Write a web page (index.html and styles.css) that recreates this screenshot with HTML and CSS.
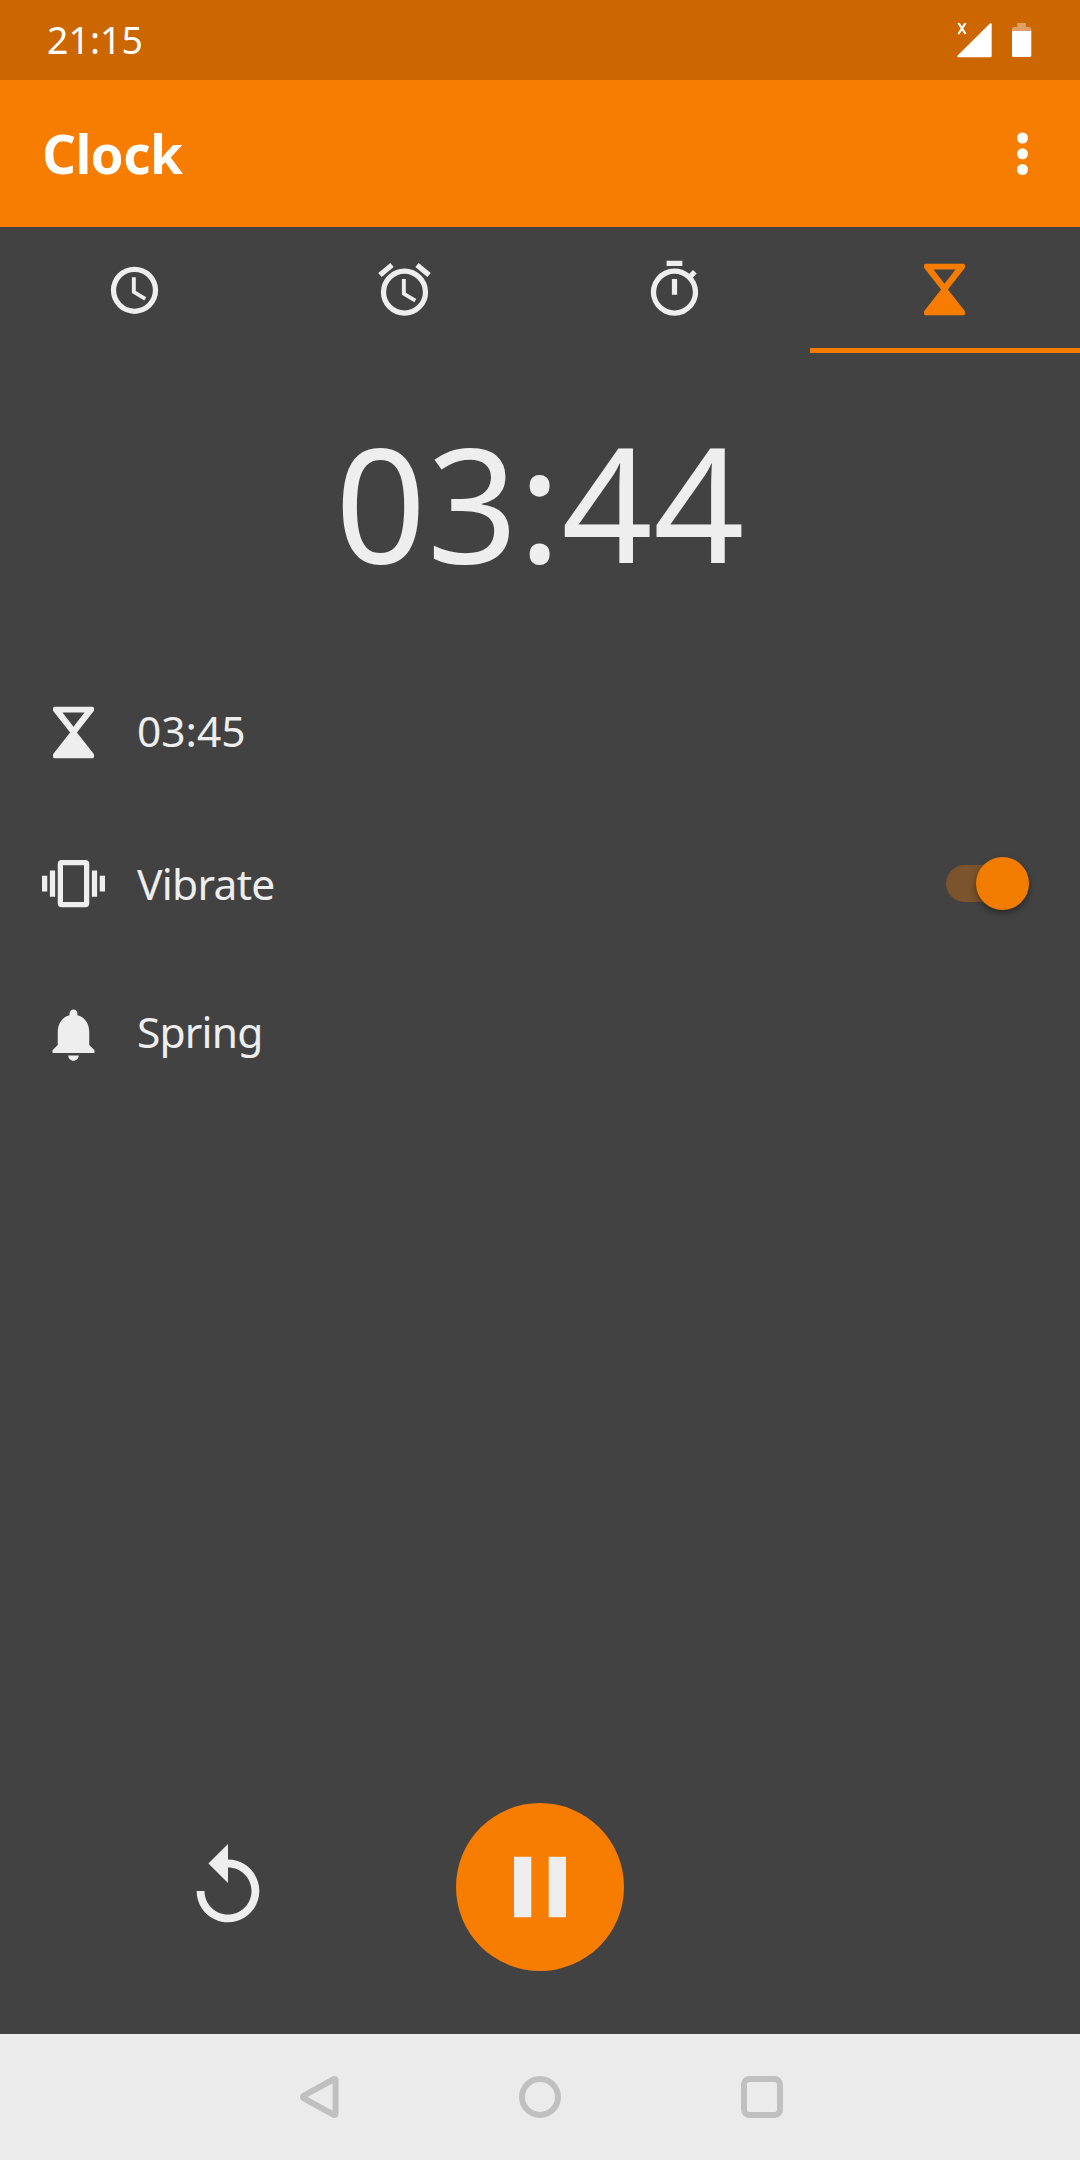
FILE: index.html
```html
<!DOCTYPE html>
<html lang="en">
<head>
<meta charset="utf-8">
<title>Clock</title>
<link rel="stylesheet" href="styles.css">
</head>
<body>
<div class="screen">
  <div class="status-bar">
    <span class="status-time">21:15</span>
    <div class="status-icons">
      <svg width="35" height="35" viewBox="0 0 35 35"><path d="M33.6.2Q34.7.2 34.7 1.2V32.8Q34.7 34.3 33.2 34.3H1.2Q-.2 34 .6 32.6L32.9.5Z" fill="#fff"/><path d="M1.4 0 8.6 11M8.6 0 1.4 11" stroke="#fff" stroke-width="2.2" fill="none"/></svg>
      <svg width="20" height="35" viewBox="0 0 20 35"><path d="M0 9V6Q0 4 2 4H5.2V0H14V4H17.5Q19.3 4 19.3 6V9Z" fill="#dfa066"/><path d="M0 8H19.3V32.5Q19.3 34 17.8 34H1.5Q0 34 0 32.5Z" fill="#fff"/></svg>
    </div>
  </div>
  <header class="app-bar">
    <h1 class="title">Clock</h1>
    <svg class="more" width="12" height="44" viewBox="0 0 12 44" fill="#fff"><circle cx="6.5" cy="6" r="5.5"/><circle cx="6.5" cy="21.8" r="5.5"/><circle cx="6.5" cy="37.5" r="5.5"/></svg>
  </header>
  <nav class="tabs">
    <div class="tab"><svg class="icon" viewBox="0 0 24 24"><path transform="translate(0 -.7)" d="M12.5 8H11v6l4.75 2.85.75-1.23-4-2.37zM12 4a9 9 0 1 0 0 18 9 9 0 0 0 0-18zm0 16a7 7 0 1 1 0-14 7 7 0 0 1 0 14z"/></svg></div>
    <div class="tab"><svg class="icon" viewBox="0 0 24 24"><path d="M12.5 8H11v6l4.75 2.85.75-1.23-4-2.37zM22 5.72l-4.6-3.86-1.29 1.53 4.6 3.86zM7.88 3.39 6.6 1.86 2 5.71l1.29 1.53zM12 4a9 9 0 1 0 0 18 9 9 0 0 0 0-18zm0 16a7 7 0 1 1 0-14 7 7 0 0 1 0 14z"/></svg></div>
    <div class="tab"><svg class="icon" viewBox="0 0 24 24"><path d="M15 1H9v2h6zm-4 13h2V8h-2zm8.03-6.61 1.42-1.42c-.43-.51-.9-.99-1.41-1.41l-1.42 1.42A8.96 8.96 0 0 0 12 4a9 9 0 1 0 7.03 3.39zM12 20a7 7 0 1 1 0-14 7 7 0 0 1 0 14z"/></svg></div>
    <div class="tab active"><svg class="icon" viewBox="0 0 24 24"><path fill-rule="evenodd" d="M4.8 2.2H19.2Q19.8 2.2 19.8 2.8V3.7L13.3 12 19.8 20.3V21.2Q19.8 21.8 19.2 21.8H4.8Q4.2 21.8 4.2 21.2V20.3L10.7 12 4.2 3.7V2.8Q4.2 2.2 4.8 2.2ZM7.8 4.4 12 9.8 16.2 4.4Z"/></svg></div>
  </nav>
  <main class="content">
    <div class="countdown">03:44</div>
    <div class="row"><svg class="icon" viewBox="0 0 24 24"><path fill-rule="evenodd" d="M4.8 2.2H19.2Q19.8 2.2 19.8 2.8V3.7L13.3 12 19.8 20.3V21.2Q19.8 21.8 19.2 21.8H4.8Q4.2 21.8 4.2 21.2V20.3L10.7 12 4.2 3.7V2.8Q4.2 2.2 4.8 2.2ZM7.8 4.4 12 9.8 16.2 4.4Z"/></svg><span class="label label-time">03:45</span></div>
    <div class="row row-vibrate"><svg class="icon" viewBox="0 0 24 24"><path d="M0 15h2V9H0zm3 2h2V7H3zm19-8v6h2V9zm-3 8h2V7h-2zM16.5 3h-9A1.5 1.5 0 0 0 6 4.5v15A1.5 1.5 0 0 0 7.5 21h9a1.5 1.5 0 0 0 1.5-1.5v-15A1.5 1.5 0 0 0 16.5 3zM16 19H8V5h8z"/></svg><span class="label label-vibrate">Vibrate</span><div class="switch"><div class="thumb"></div></div></div>
    <div class="row row-sound"><svg class="icon" viewBox="0 0 24 24"><path d="M12 22c1.1 0 2-.9 2-2h-4c0 1.1.89 2 2 2zm6-6v-5c0-3.07-1.64-5.64-4.5-6.32V4c0-.83-.67-1.5-1.5-1.5s-1.5.67-1.5 1.5v.68C7.63 5.36 6 7.92 6 11v5l-2 2v1h16v-1z"/></svg><span class="label label-sound">Spring</span></div>
  </main>
  <div class="controls">
    <svg class="reset" viewBox="0 0 24 24"><path d="M12 5V1L7 6l5 5V7c3.31 0 6 2.69 6 6s-2.69 6-6 6-6-2.69-6-6H4c0 4.42 3.58 8 8 8s8-3.58 8-8-3.58-8-8-8z"/></svg>
    <div class="pause"><svg width="104" height="104" viewBox="0 0 24 24"><path d="M6 19h4V5H6zm8-14v14h4V5z"/></svg></div>
  </div>
  <div class="nav-bar">
    <svg width="42" height="42" viewBox="0 0 42 42"><path d="M37.2 3 6.8 19.7Q5 21 6.8 22.3L37.200 39Q38.600 39 38.600 37.200V4.800Q38.600 3 37.200 3Z"/></svg>
    <svg width="42" height="42" viewBox="0 0 42 42"><circle cx="21" cy="21" r="18"/></svg>
    <svg width="42" height="42" viewBox="0 0 42 42"><rect x="3" y="3" width="36" height="36" rx="5.5"/></svg>
  </div>
</div>
</body>
</html>
```
FILE: styles.css
```css
* { box-sizing: border-box; }
body {
  margin: 0;
  background: #424242;
  color: #eee;
  font-family: "Noto Sans", sans-serif;
}
svg { display: block; flex: none; }
.screen {
  width: 1080px;
  height: 2160px;
  display: flex;
  flex-direction: column;
  overflow: hidden;
}
.status-bar {
  height: 80px;
  flex: none;
  display: flex;
  justify-content: space-between;
  padding: 0 48px 0 47px;
  background: #cc6600;
  color: #fff;
}
.status-time {
  font-size: 37.5px;
  line-height: 80px;
  font-weight: 400;
}
.status-icons { display: flex; gap: 20px; padding-top: 23px; }
.app-bar {
  height: 147px;
  flex: none;
  display: flex;
  align-items: center;
  justify-content: space-between;
  padding: 0 52px 0 42px;
  background: #f77d00;
  color: #fff;
}
.title {
  margin: 0;
  padding-top: 1px;
  font-size: 53px;
  line-height: 146px;
  font-weight: 700;
  letter-spacing: -.6px;
}
.tabs {
  height: 126px;
  flex: none;
  display: grid;
  grid-template-columns: repeat(4, 1fr);
}
.tab {
  display: flex;
  justify-content: center;
  padding: 31px 2px 0 0;
}
.tab.active { border-bottom: 5px solid #f57c00; }
.icon { width: 63px; height: 63px; fill: #eee; }
.tab.active .icon { fill: #f57c00; }
.content { flex: 1; }
.countdown {
  padding-top: 39px;
  height: 311px;
  text-align: center;
  font-size: 159.5px;
  line-height: 218px;
  letter-spacing: .5px;
}
.row {
  height: 136px;
  display: flex;
  align-items: center;
  padding: 0 51px 0 42px;
}
.row-vibrate { height: 167px; }
.row-sound { height: 134px; }
.label {
  margin-left: 32px;
  font-size: 42.5px;
  line-height: 60px;
}
.label-time { padding-bottom: 3px; }
.label-vibrate { letter-spacing: -.7px; padding-top: 1px; }
.label-sound { letter-spacing: -.8px; padding-bottom: 4px; }
.switch {
  width: 83px;
  height: 37px;
  margin-left: auto;
  border-radius: 19px;
  background: #7b532c;
  display: flex;
  align-items: center;
  justify-content: flex-end;
}
.thumb {
  width: 53px;
  height: 53px;
  flex: none;
  border-radius: 50%;
  background: #f17c00;
  box-shadow: 0 3px 6px rgba(0, 0, 0, .4);
}
.controls {
  height: 294px;
  flex: none;
  display: flex;
  align-items: center;
  padding-left: 181px;
}
.reset { width: 94px; height: 94px; fill: #eee; }
.pause {
  width: 168px;
  height: 168px;
  margin-left: 181px;
  border-radius: 50%;
  background: #f77d00;
  display: flex;
  align-items: center;
  justify-content: center;
}
.pause svg { fill: #eee; }
.nav-bar {
  height: 126px;
  flex: none;
  display: flex;
  align-items: center;
  justify-content: center;
  gap: 180px;
  background: #ebebeb;
}
.nav-bar svg { fill: none; stroke: #c0c0c0; stroke-width: 6; stroke-linejoin: round; }
```
